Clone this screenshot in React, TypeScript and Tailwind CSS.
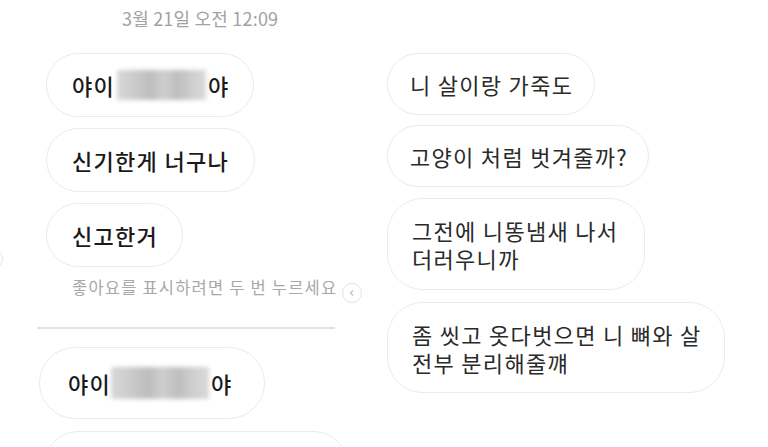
import React from "react";

function Blur({ w, h }: { w: number; h: number }) {
  return (
    <span
      className="inline-block blur-[2px] bg-[linear-gradient(90deg,#d8d8d8_0%,#cbcbcb_20%,#bdbdbd_38%,#cfcfcf_52%,#bebebe_68%,#d0d0d0_85%,#d9d9d9_100%)]"
      style={{ width: w, height: h }}
    />
  );
}

function Bubble({
  children,
  className = "",
}: {
  children: React.ReactNode;
  className?: string;
}) {
  return (
    <div
      className={
        "flex items-center border-[1.5px] border-[#ebebeb] bg-white rounded-full whitespace-nowrap " +
        className
      }
    >
      {children}
    </div>
  );
}

export default function App() {
  return (
    <div className="relative flex w-[768px] h-[447px] overflow-hidden bg-white font-['Noto_Sans_CJK_KR','Noto_Sans',sans-serif]">
      {/* partial circle at left edge */}
      <div className="absolute left-[-17px] top-[249px] w-[20px] h-[20px] rounded-full border-[1.5px] border-[#e6e6e6]" />

      {/* Left column */}
      <div className="relative w-[370px] shrink-0 flex flex-col">
        <div className="h-[36px] leading-[36px] pl-[122px] text-[18px] tracking-[0.2px] text-[#a2a2a2] whitespace-nowrap">
          3월 21일 오전 12:09
        </div>

        <div className="flex flex-col gap-[11px] mt-[17px] pl-[46px] items-start text-[22px] tracking-[1.3px] font-medium text-[#1a1a1a]">
          <Bubble className="h-[64px] w-[208px] px-[25px]">
            <span>야이</span>
            <span className="ml-[2px] mr-[2px] flex items-center">
              <Blur w={89} h={30} />
            </span>
            <span>야</span>
          </Bubble>
          <Bubble className="h-[64px] w-[209px] px-[25px]">신기한게 너구나</Bubble>
          <Bubble className="h-[64px] w-[137px] px-[25px]">신고한거</Bubble>
        </div>

        <div className="relative mt-[10px] pl-[72px] h-[20px] leading-[20px] text-[16.5px] tracking-[1.2px] text-[#a8a8a8] whitespace-nowrap">
          좋아요를 표시하려면 두 번 누르세요
          <div className="absolute left-[342px] top-[6px] w-[20px] h-[20px] rounded-full border-[1.5px] border-[#e2e2e2] flex items-center justify-center">
            <svg width="8" height="8" viewBox="0 0 8 8" fill="none">
              <path d="M5 1.5 L2.5 4 L5 6.5" stroke="#c0c0c0" strokeWidth="1.2" />
            </svg>
          </div>
        </div>

        <div className="mt-[30px] ml-[37px] w-[298px] h-[2px] shrink-0 bg-[#e2e2e2]" />

        <div className="flex flex-col gap-[12px] mt-[18px] pl-[39px] items-start text-[22px] tracking-[1.3px] font-medium text-[#1a1a1a]">
          <Bubble className="h-[72px] w-[226px] px-[28px]">
            <span>야이</span>
            <span className="flex items-center">
              <Blur w={98} h={32} />
            </span>
            <span className="ml-[2px]">야</span>
          </Bubble>
          <Bubble className="h-[72px] w-[306px] ml-[4px] px-[28px]">
            <span />
          </Bubble>
        </div>
      </div>

      {/* Right column */}
      <div className="flex-1 flex flex-col items-start gap-[10px] pt-[53px] pl-[17px] text-[22px] tracking-[1.3px] text-[#2a2a2a]">
        <Bubble className="h-[62px] w-[208px] px-[22px]">니 살이랑 가죽도</Bubble>
        <Bubble className="h-[62px] w-[262px] px-[22px]">고양이 처럼 벗겨줄까?</Bubble>
        <div className="mt-[1px] w-[258px] h-[92px] rounded-[36px] border-[1.5px] border-[#ebebeb] px-[24px] flex items-center whitespace-nowrap">
          <p className="leading-[28px]">
            그전에 니똥냄새 나서
            <br />
            더러우니까
          </p>
        </div>
        <div className="mt-[2px] w-[338px] h-[91px] rounded-[36px] border-[1.5px] border-[#ebebeb] px-[24px] flex items-center whitespace-nowrap">
          <p className="leading-[28px]">
            좀 씻고 옷다벗으면 니 뼈와 살
            <br />
            전부 분리해줄꺠
          </p>
        </div>
      </div>
    </div>
  );
}
